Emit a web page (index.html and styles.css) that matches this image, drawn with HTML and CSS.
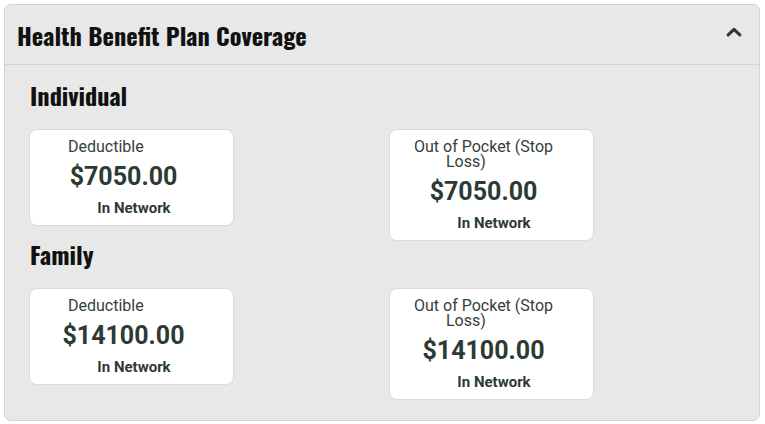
FILE: index.html
```html
<!DOCTYPE html>
<html lang="en">
<head>
<meta charset="utf-8">
<title>Health Benefit Plan Coverage</title>
<link rel="stylesheet" href="styles.css">
</head>
<body>
<section class="panel">
  <header class="panel-header">
    <h2 class="panel-title">Health Benefit Plan Coverage</h2>
    <svg class="chevron" width="16" height="10" viewBox="0 0 16 10" aria-hidden="true">
      <polyline points="2.2,7.8 8,2.4 13.8,7.8" fill="none" stroke="#2c3a34" stroke-width="3.2" stroke-linecap="round" stroke-linejoin="round"/>
    </svg>
  </header>
  <div class="panel-body">
    <h3 class="group-title">Individual</h3>
    <div class="card-row">
      <div class="card">
        <div class="card-label">Deductible</div>
        <div class="card-amount">$7050.00</div>
        <div class="card-network">In Network</div>
      </div>
      <div class="card">
        <div class="card-label card-label-wrap">Out of Pocket (Stop Loss)</div>
        <div class="card-amount">$7050.00</div>
        <div class="card-network">In Network</div>
      </div>
    </div>
    <h3 class="group-title">Family</h3>
    <div class="card-row">
      <div class="card">
        <div class="card-label">Deductible</div>
        <div class="card-amount">$14100.00</div>
        <div class="card-network">In Network</div>
      </div>
      <div class="card">
        <div class="card-label card-label-wrap">Out of Pocket (Stop Loss)</div>
        <div class="card-amount">$14100.00</div>
        <div class="card-network">In Network</div>
      </div>
    </div>
  </div>
</section>
</body>
</html>
```

FILE: styles.css
```css
* {
  box-sizing: border-box;
}

html, body {
  margin: 0;
  background: #ffffff;
}

body {
  padding: 4px 5px 0 4px;
  font-family: Roboto, "Liberation Sans", Arial, sans-serif;
  color: #2c3a34;
}

.panel {
  width: 756px;
  height: 417px;
  background: #e8e8e8;
  border: 1px solid #d2d2d2;
  border-radius: 7px;
  overflow: hidden;
}

.panel-header {
  display: flex;
  align-items: center;
  justify-content: space-between;
  height: 60px;
  padding: 0 17px 0 12px;
  border-bottom: 1px solid #d4d4d4;
}

.panel-title,
.group-title {
  margin: 0;
  font-family: "Oswald", "Roboto Condensed", "DejaVu Sans Condensed", "Liberation Sans", sans-serif;
  font-weight: 700;
  font-size: 24.3px;
  line-height: 30px;
  color: #111111;
}

.panel-title {
  white-space: nowrap;
  margin-top: 0;
}

.chevron {
  display: block;
  flex: none;
  margin-top: -5px;
}

.panel-body {
  padding: 15px 10px 0 25px;
}

.group-title {
  margin-bottom: 19px;
}

.card-row {
  display: grid;
  grid-template-columns: 1fr 1fr;
  align-items: start;
  margin-left: -1px;
}

.card-row + .group-title {
  margin-top: -2px;
}

.card {
  width: 205px;
  background: #ffffff;
  border: 1px solid #dadada;
  border-radius: 8px;
  padding: 9px 0 8px;
}

.card-label {
  font-size: 16px;
  line-height: 15px;
  font-weight: 400;
  color: #35403b;
  padding-left: 38px;
  margin-bottom: 8px;
}

.card-label-wrap {
  padding-left: 56px;
  padding-right: 17px;
  text-indent: -32px;
}

.card-amount {
  font-size: 25px;
  line-height: 29px;
  font-weight: 700;
  text-align: center;
  padding-right: 16px;
  margin-bottom: 8px;
  color: #2c3a34;
}

.card-network {
  font-size: 15px;
  line-height: 18px;
  font-weight: 700;
  text-align: center;
  padding-left: 5px;
  color: #2c3a34;
}
```
